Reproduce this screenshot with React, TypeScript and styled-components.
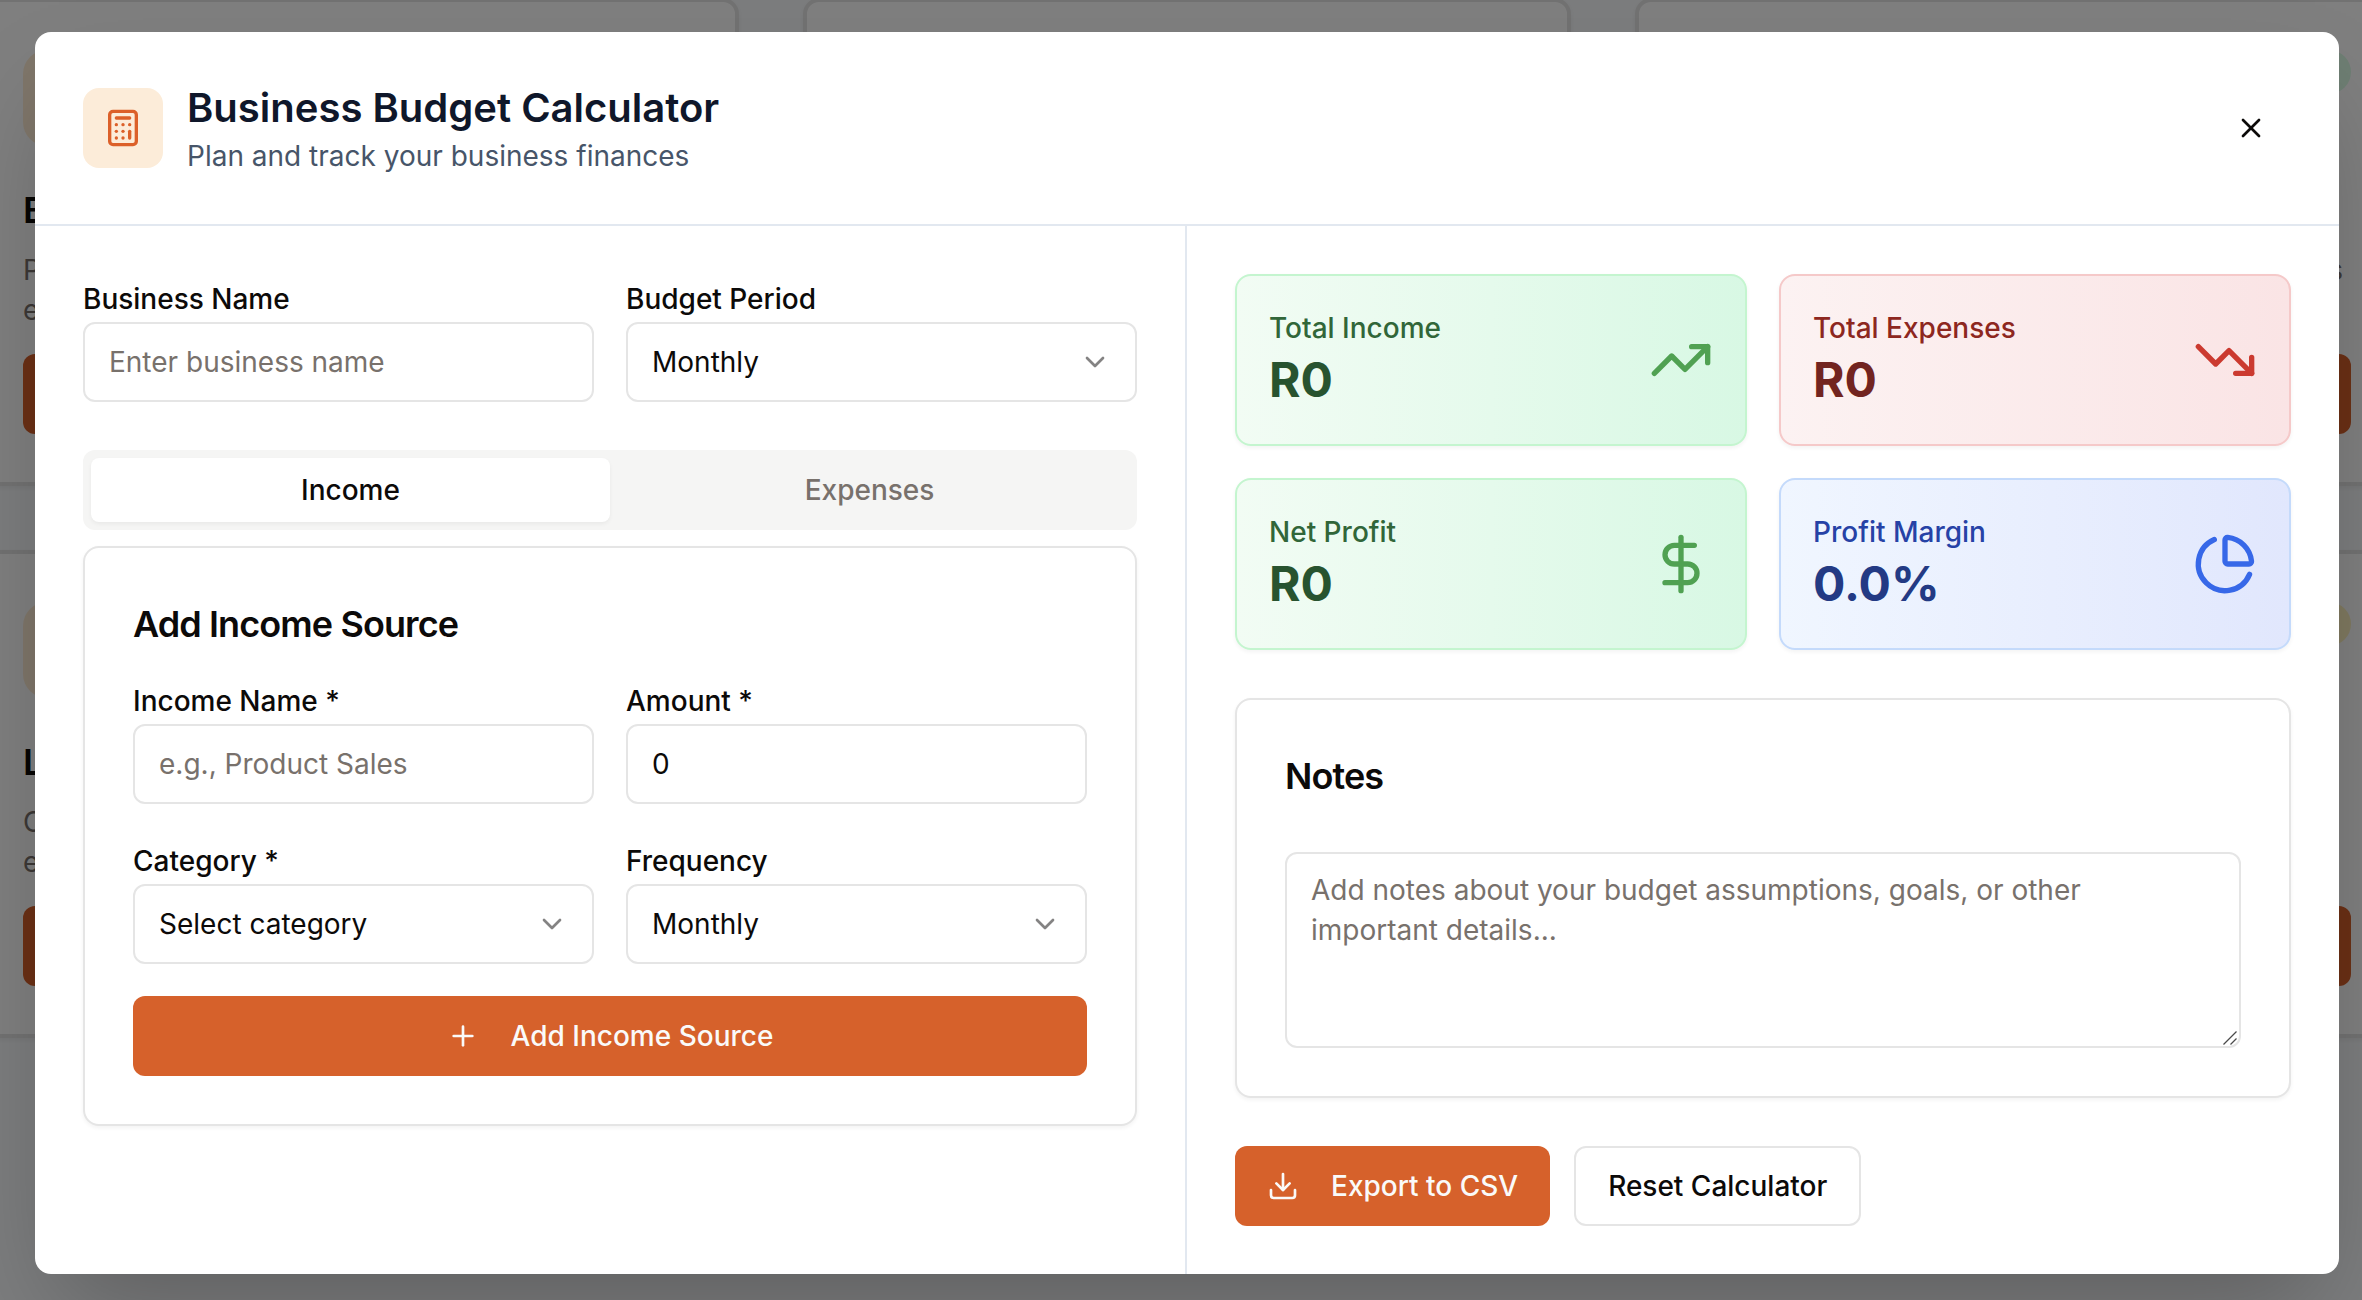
import React from "react";
import styled, { createGlobalStyle, css } from "styled-components";
import {
  Calculator,
  ChartPie,
  ChevronDown,
  DollarSign,
  Download,
  Plus,
  TrendingDown,
  TrendingUp,
  X,
} from "lucide-react";

const GlobalStyle = createGlobalStyle`
  *, *::before, *::after { box-sizing: border-box; }
  html, body { margin: 0; padding: 0; }
  body {
    width: 2362px;
    height: 1300px;
    overflow: hidden;
    font-family: Inter, "Liberation Sans", sans-serif;
    font-size: 32px;
    line-height: 48px;
    color: #0c0a09;
    -webkit-font-smoothing: antialiased;
  }
  h2, h3, p { margin: 0; }
  button, input, textarea { font: inherit; color: inherit; margin: 0; }
`;

const Screen = styled.div`
  position: relative;
  width: 2362px;
  height: 1300px;
  overflow: hidden;
  background: #f8fafc;
`;

/* Tool catalogue behind the dialog */
const Catalogue = styled.div`
  display: grid;
  grid-template-columns: repeat(3, 768px);
  grid-auto-rows: 488px;
  gap: 64px;
  margin: -2px 0 0 -29px;
`;

const ToolCard = styled.div`
  display: flex;
  flex-direction: column;
  padding: 48px;
  border: 4px solid #e5e5e5;
  border-radius: 16px;
  background: #fff;
  box-shadow: 0 2px 4px rgba(0, 0, 0, 0.05);
`;

const ToolTop = styled.div`
  display: flex;
  justify-content: space-between;
  align-items: flex-start;
`;

const ToolTile = styled.div`
  width: 96px;
  height: 96px;
  border-radius: 24px;
  background: #ffedd5;
`;

const ToolBadge = styled.div<{ $tone: string }>`
  width: 120px;
  height: 44px;
  border-radius: 22px;
  background: ${(p) => p.$tone};
`;

const ToolTitle = styled.div`
  margin-top: 40px;
  font-size: 36px;
  font-weight: 600;
  line-height: 48px;
`;

const ToolText = styled.p<{ $end?: boolean }>`
  margin-top: 16px;
  height: 80px;
  padding-right: 8px;
  font-size: 28px;
  line-height: 40px;
  color: #78716c;
  white-space: pre-line;
  text-align: ${(p) => (p.$end ? "right" : "left")};
`;

const ToolButton = styled.div`
  margin-top: 24px;
  height: 80px;
  border-radius: 12px;
  background: #d6602a;
`;

const Overlay = styled.div`
  position: absolute;
  inset: 0;
  padding: 32px 23px 26px 35px;
  background: rgba(0, 0, 0, 0.5);
`;

const Dialog = styled.div`
  display: flex;
  flex-direction: column;
  width: 2304px;
  height: 1242px;
  border-radius: 16px;
  background: #fff;
  overflow: hidden;
  box-shadow: 0 50px 100px -24px rgba(0, 0, 0, 0.25);
`;

const Header = styled.header`
  display: flex;
  align-items: center;
  justify-content: space-between;
  height: 194px;
  padding: 48px;
  border-bottom: 2px solid #e2e8f0;
`;

const Brand = styled.div`
  display: flex;
  align-items: center;
  gap: 24px;
`;

const BrandIcon = styled.div`
  display: flex;
  align-items: center;
  justify-content: center;
  width: 80px;
  height: 80px;
  border-radius: 16px;
  background: #fcecd9;
  color: #dc6029;
`;

const Title = styled.h2`
  font-size: 40px;
  font-weight: 600;
  line-height: 56px;
  color: #0f172a;
`;

const Subtitle = styled.p`
  font-size: 28px;
  line-height: 40px;
  color: #475569;
`;

const CloseButton = styled.button`
  display: flex;
  align-items: center;
  justify-content: center;
  width: 80px;
  height: 80px;
  padding: 0;
  border: 0;
  border-radius: 12px;
  background: transparent;
`;

const Columns = styled.div`
  display: grid;
  grid-template-columns: 1fr 1fr;
  flex: 1;
`;

const Column = styled.section<{ $divided?: boolean }>`
  display: flex;
  flex-direction: column;
  padding: 48px;
  ${(p) =>
    p.$divided &&
    css`
      border-right: 2px solid #e2e8f0;
    `}
`;

const FieldGrid = styled.div`
  display: grid;
  grid-template-columns: 1fr 1fr;
  gap: 32px;
`;

const Label = styled.label`
  font-size: 28px;
  line-height: 28px;
  font-weight: 500;
`;

const fieldBox = css`
  border: 2px solid #e5e5e5;
  border-radius: 12px;
  background: #fff;
  font-size: 28px;
  line-height: 40px;
  outline: none;
`;

const Input = styled.input`
  ${fieldBox}
  display: block;
  width: 100%;
  height: 80px;
  padding: 16px 24px;
  &::placeholder { color: #78716c; opacity: 1; }
`;

const SelectBox = styled.button`
  ${fieldBox}
  display: flex;
  align-items: center;
  justify-content: space-between;
  width: 100%;
  height: 80px;
  padding: 16px 24px;
  svg { opacity: 0.5; }
`;

const Tabs = styled.div`
  display: grid;
  grid-template-columns: 1fr 1fr;
  height: 80px;
  margin: 48px 0 16px;
  padding: 8px;
  border-radius: 12px;
  background: #f5f5f4;
`;

const Tab = styled.button<{ $active?: boolean }>`
  border: 0;
  border-radius: 8px;
  padding: 12px 24px;
  font-size: 28px;
  line-height: 40px;
  font-weight: 500;
  color: ${(p) => (p.$active ? "#0c0a09" : "#78716c")};
  background: ${(p) => (p.$active ? "#fff" : "transparent")};
  box-shadow: ${(p) => (p.$active ? "0 2px 4px rgba(0, 0, 0, 0.05)" : "none")};
`;

const Card = styled.div`
  padding: 48px;
  border: 2px solid #e5e5e5;
  border-radius: 16px;
  background: #fff;
  box-shadow: 0 2px 4px rgba(0, 0, 0, 0.05);
`;

const CardTitle = styled.h3<{ $space: number }>`
  margin-bottom: ${(p) => p.$space}px;
  font-size: 36px;
  font-weight: 600;
  line-height: 56px;
  letter-spacing: -0.025em;
`;

const Button = styled.button<{ $outline?: boolean; $block?: boolean }>`
  display: inline-flex;
  align-items: center;
  justify-content: center;
  gap: 32px;
  width: ${(p) => (p.$block ? "100%" : "auto")};
  height: 80px;
  padding: 0 32px;
  border: ${(p) => (p.$outline ? "2px solid #e5e5e5" : "0")};
  border-radius: 12px;
  background: ${(p) => (p.$outline ? "#fff" : "#d6612b")};
  color: ${(p) => (p.$outline ? "#0c0a09" : "#fafaf9")};
  font-size: 28px;
  line-height: 40px;
  font-weight: 500;
  white-space: nowrap;
`;

const AddButton = styled(Button)`
  display: flex;
  margin-top: 32px;
`;

type Tone = "green" | "red" | "blue";

const tones: Record<Tone, { from: string; to: string; border: string; label: string; value: string; icon: string }> = {
  green: { from: "#f2fcf4", to: "#d8f8e4", border: "#c4f5cf", label: "#316639", value: "#28532f", icon: "#50a152" },
  red: { from: "#fcf2f2", to: "#fae4e5", border: "#f5c9c9", label: "#8d2720", value: "#722420", icon: "#cb3a30" },
  blue: { from: "#f0f6ff", to: "#e1e7fd", border: "#c4dafb", label: "#2642a6", value: "#233a84", icon: "#3768e8" },
};

const Stats = styled.div`
  display: grid;
  grid-template-columns: 1fr 1fr;
  gap: 32px;
  margin-bottom: 48px;
`;

const StatCard = styled.div<{ $tone: Tone }>`
  display: flex;
  align-items: center;
  justify-content: space-between;
  height: 172px;
  padding: 32px;
  border: 2px solid ${(p) => tones[p.$tone].border};
  border-radius: 16px;
  background: linear-gradient(to right, ${(p) => tones[p.$tone].from}, ${(p) => tones[p.$tone].to});
  box-shadow: 0 2px 4px rgba(0, 0, 0, 0.05);
  svg { color: ${(p) => tones[p.$tone].icon}; }
`;

const StatLabel = styled.p<{ $tone: Tone }>`
  font-size: 28px;
  line-height: 40px;
  font-weight: 500;
  color: ${(p) => tones[p.$tone].label};
`;

const StatValue = styled.p<{ $tone: Tone }>`
  font-size: 48px;
  line-height: 64px;
  font-weight: 700;
  color: ${(p) => tones[p.$tone].value};
`;

const Notes = styled.textarea`
  ${fieldBox}
  display: block;
  width: 100%;
  height: 196px;
  padding: 16px 24px;
  resize: none;
  &::placeholder { color: #78716c; opacity: 1; }
`;

const NotesWrap = styled.div`
  position: relative;
`;

const ResizeGrip = styled.svg`
  position: absolute;
  right: 3px;
  bottom: 2px;
  width: 16px;
  height: 16px;
`;

const Actions = styled.div`
  display: flex;
  gap: 24px;
  margin-top: 48px;
`;

const Field = ({ label, children }: { label: string; children: React.ReactNode }) => (
  <div>
    <Label>{label}</Label>
    {children}
  </div>
);

const Select = ({ value }: { value: string }) => (
  <SelectBox type="button">
    <span>{value}</span>
    <ChevronDown size={32} />
  </SelectBox>
);

const Stat = ({ tone, label, value, icon }: { tone: Tone; label: string; value: string; icon: React.ReactNode }) => (
  <StatCard $tone={tone}>
    <div>
      <StatLabel $tone={tone}>{label}</StatLabel>
      <StatValue $tone={tone}>{value}</StatValue>
    </div>
    {icon}
  </StatCard>
);

const tools = [
  { title: "B", text: "P\ne", badge: "#dcfce7" },
  { title: "", text: "", badge: "#dcfce7" },
  { title: "", text: "s", badge: "#dcfce7", end: true },
  { title: "L", text: "C\ne", badge: "#fef9c3" },
  { title: "", text: "", badge: "#fef9c3" },
  { title: "", text: "", badge: "#fef3c0", end: true },
];

export default function App() {
  return (
    <Screen>
      <GlobalStyle />
      <Catalogue aria-hidden>
        {tools.map((tool, i) => (
          <ToolCard key={i}>
            <ToolTop>
              <ToolTile />
              <ToolBadge $tone={tool.badge} />
            </ToolTop>
            <ToolTitle>{tool.title || "\u00a0"}</ToolTitle>
            <ToolText $end={tool.end}>{tool.text}</ToolText>
            <ToolButton />
          </ToolCard>
        ))}
      </Catalogue>
      <Overlay>
        <Dialog role="dialog">
          <Header>
            <Brand>
              <BrandIcon>
                <Calculator size={40} />
              </BrandIcon>
              <div>
                <Title>Business Budget Calculator</Title>
                <Subtitle>Plan and track your business finances</Subtitle>
              </div>
            </Brand>
            <CloseButton aria-label="Close">
              <X size={32} />
            </CloseButton>
          </Header>
          <Columns>
            <Column $divided>
              <FieldGrid>
                <Field label="Business Name">
                  <Input placeholder="Enter business name" />
                </Field>
                <Field label="Budget Period">
                  <Select value="Monthly" />
                </Field>
              </FieldGrid>
              <Tabs>
                <Tab $active>Income</Tab>
                <Tab>Expenses</Tab>
              </Tabs>
              <Card>
                <CardTitle $space={24}>Add Income Source</CardTitle>
                <FieldGrid>
                  <Field label="Income Name *">
                    <Input placeholder="e.g., Product Sales" />
                  </Field>
                  <Field label="Amount *">
                    <Input defaultValue="0" />
                  </Field>
                  <Field label="Category *">
                    <Select value="Select category" />
                  </Field>
                  <Field label="Frequency">
                    <Select value="Monthly" />
                  </Field>
                </FieldGrid>
                <AddButton $block>
                  <Plus size={32} />
                  Add Income Source
                </AddButton>
              </Card>
            </Column>
            <Column>
              <Stats>
                <Stat tone="green" label="Total Income" value="R0" icon={<TrendingUp size={64} />} />
                <Stat tone="red" label="Total Expenses" value="R0" icon={<TrendingDown size={64} />} />
                <Stat tone="green" label="Net Profit" value="R0" icon={<DollarSign size={64} />} />
                <Stat tone="blue" label="Profit Margin" value="0.0%" icon={<ChartPie size={64} />} />
              </Stats>
              <Card>
                <CardTitle $space={48}>Notes</CardTitle>
                <NotesWrap>
                  <Notes placeholder="Add notes about your budget assumptions, goals, or other important details..." />
                  <ResizeGrip viewBox="0 0 16 16" fill="none" stroke="#4a4a4a" strokeWidth="1.3">
                    <path d="M1.5 14.5 14.5 1.5M8.5 14.5l6-6" />
                  </ResizeGrip>
                </NotesWrap>
              </Card>
              <Actions>
                <Button>
                  <Download size={32} />
                  Export to CSV
                </Button>
                <Button $outline>Reset Calculator</Button>
              </Actions>
            </Column>
          </Columns>
        </Dialog>
      </Overlay>
    </Screen>
  );
}
